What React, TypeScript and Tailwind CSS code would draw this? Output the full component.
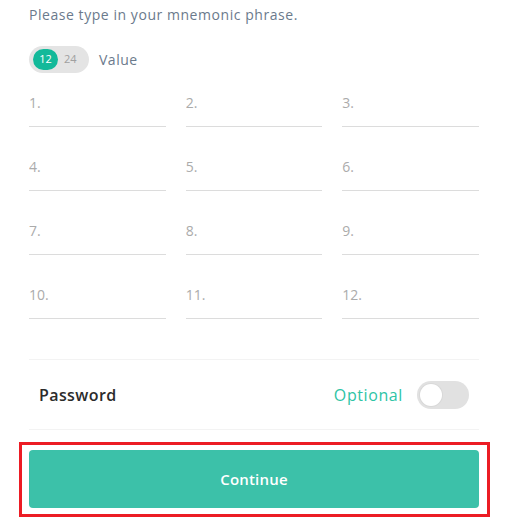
import React from "react";

const font = { fontFamily: '"Open Sans", "Liberation Sans", sans-serif' };

export default function App() {
  const nums = Array.from({ length: 12 }, (_, i) => i + 1);
  return (
    <div className="w-[509px] h-[526px] bg-white overflow-hidden" style={font}>
      <div className="pl-[29px] pr-[30px] pt-[5px]">
        <p className="text-[14px] leading-[20px] text-[#6b7a8c] tracking-[0.55px]">
          Please type in your mnemonic phrase.
        </p>
        <div className="mt-[21px] flex items-center h-[27px]">
          <div className="flex items-center w-[60px] h-[27px] rounded-full bg-[#e4e4e4] pl-[4px]">
            <div className="w-[25px] h-[21px] rounded-full bg-[#13b99a] text-white text-[11px] flex items-center justify-center">
              12
            </div>
            <div className="ml-[6px] text-[11px] text-[#a0a0a0]">24</div>
          </div>
          <span className="ml-[10px] text-[14px] text-[#6b7a8c] tracking-[0.5px]">Value</span>
        </div>
        <div className="mt-[6px] grid grid-cols-3 gap-x-[20px] gap-y-[16px]">
          {nums.map((n) => (
            <input
              key={n}
              placeholder={`${n}.`}
              className="h-[48px] w-full border-b border-[#dcdcdc] text-[14px] outline-none placeholder:text-[#ababab] text-[#333]"
            />
          ))}
        </div>
        <div className="mt-[40px] border-t border-[#f3f3f3]">
          <div className="h-[69px] flex items-center justify-between px-[10px]">
            <span className="text-[16px] font-semibold text-[#2b2b2b] tracking-[0.4px]">Password</span>
            <div className="flex items-center">
              <span className="text-[16px] text-[#2ec4a5] mr-[14px] tracking-[0.6px]">Optional</span>
              <div className="w-[52px] h-[28px] rounded-full bg-[#e1e1e1] flex items-center pl-[3px]">
                <div className="w-[22px] h-[22px] rounded-full bg-white shadow-[0_0_0_1px_#d8d8d8]" />
              </div>
            </div>
          </div>
        </div>
        <div className="border-t border-[#f3f3f3]" />
        <div className="mt-[12px] -ml-[10px] -mr-[11px] border-[3px] border-[#ec1c24] pl-[7px] pr-[8px] pt-[5px] pb-[6px]">
          <button className="w-full h-[58px] rounded-[4px] bg-[#3cc1a9] text-white text-[15px] font-semibold tracking-[0.2px]">
            Continue
          </button>
        </div>
      </div>
    </div>
  );
}
